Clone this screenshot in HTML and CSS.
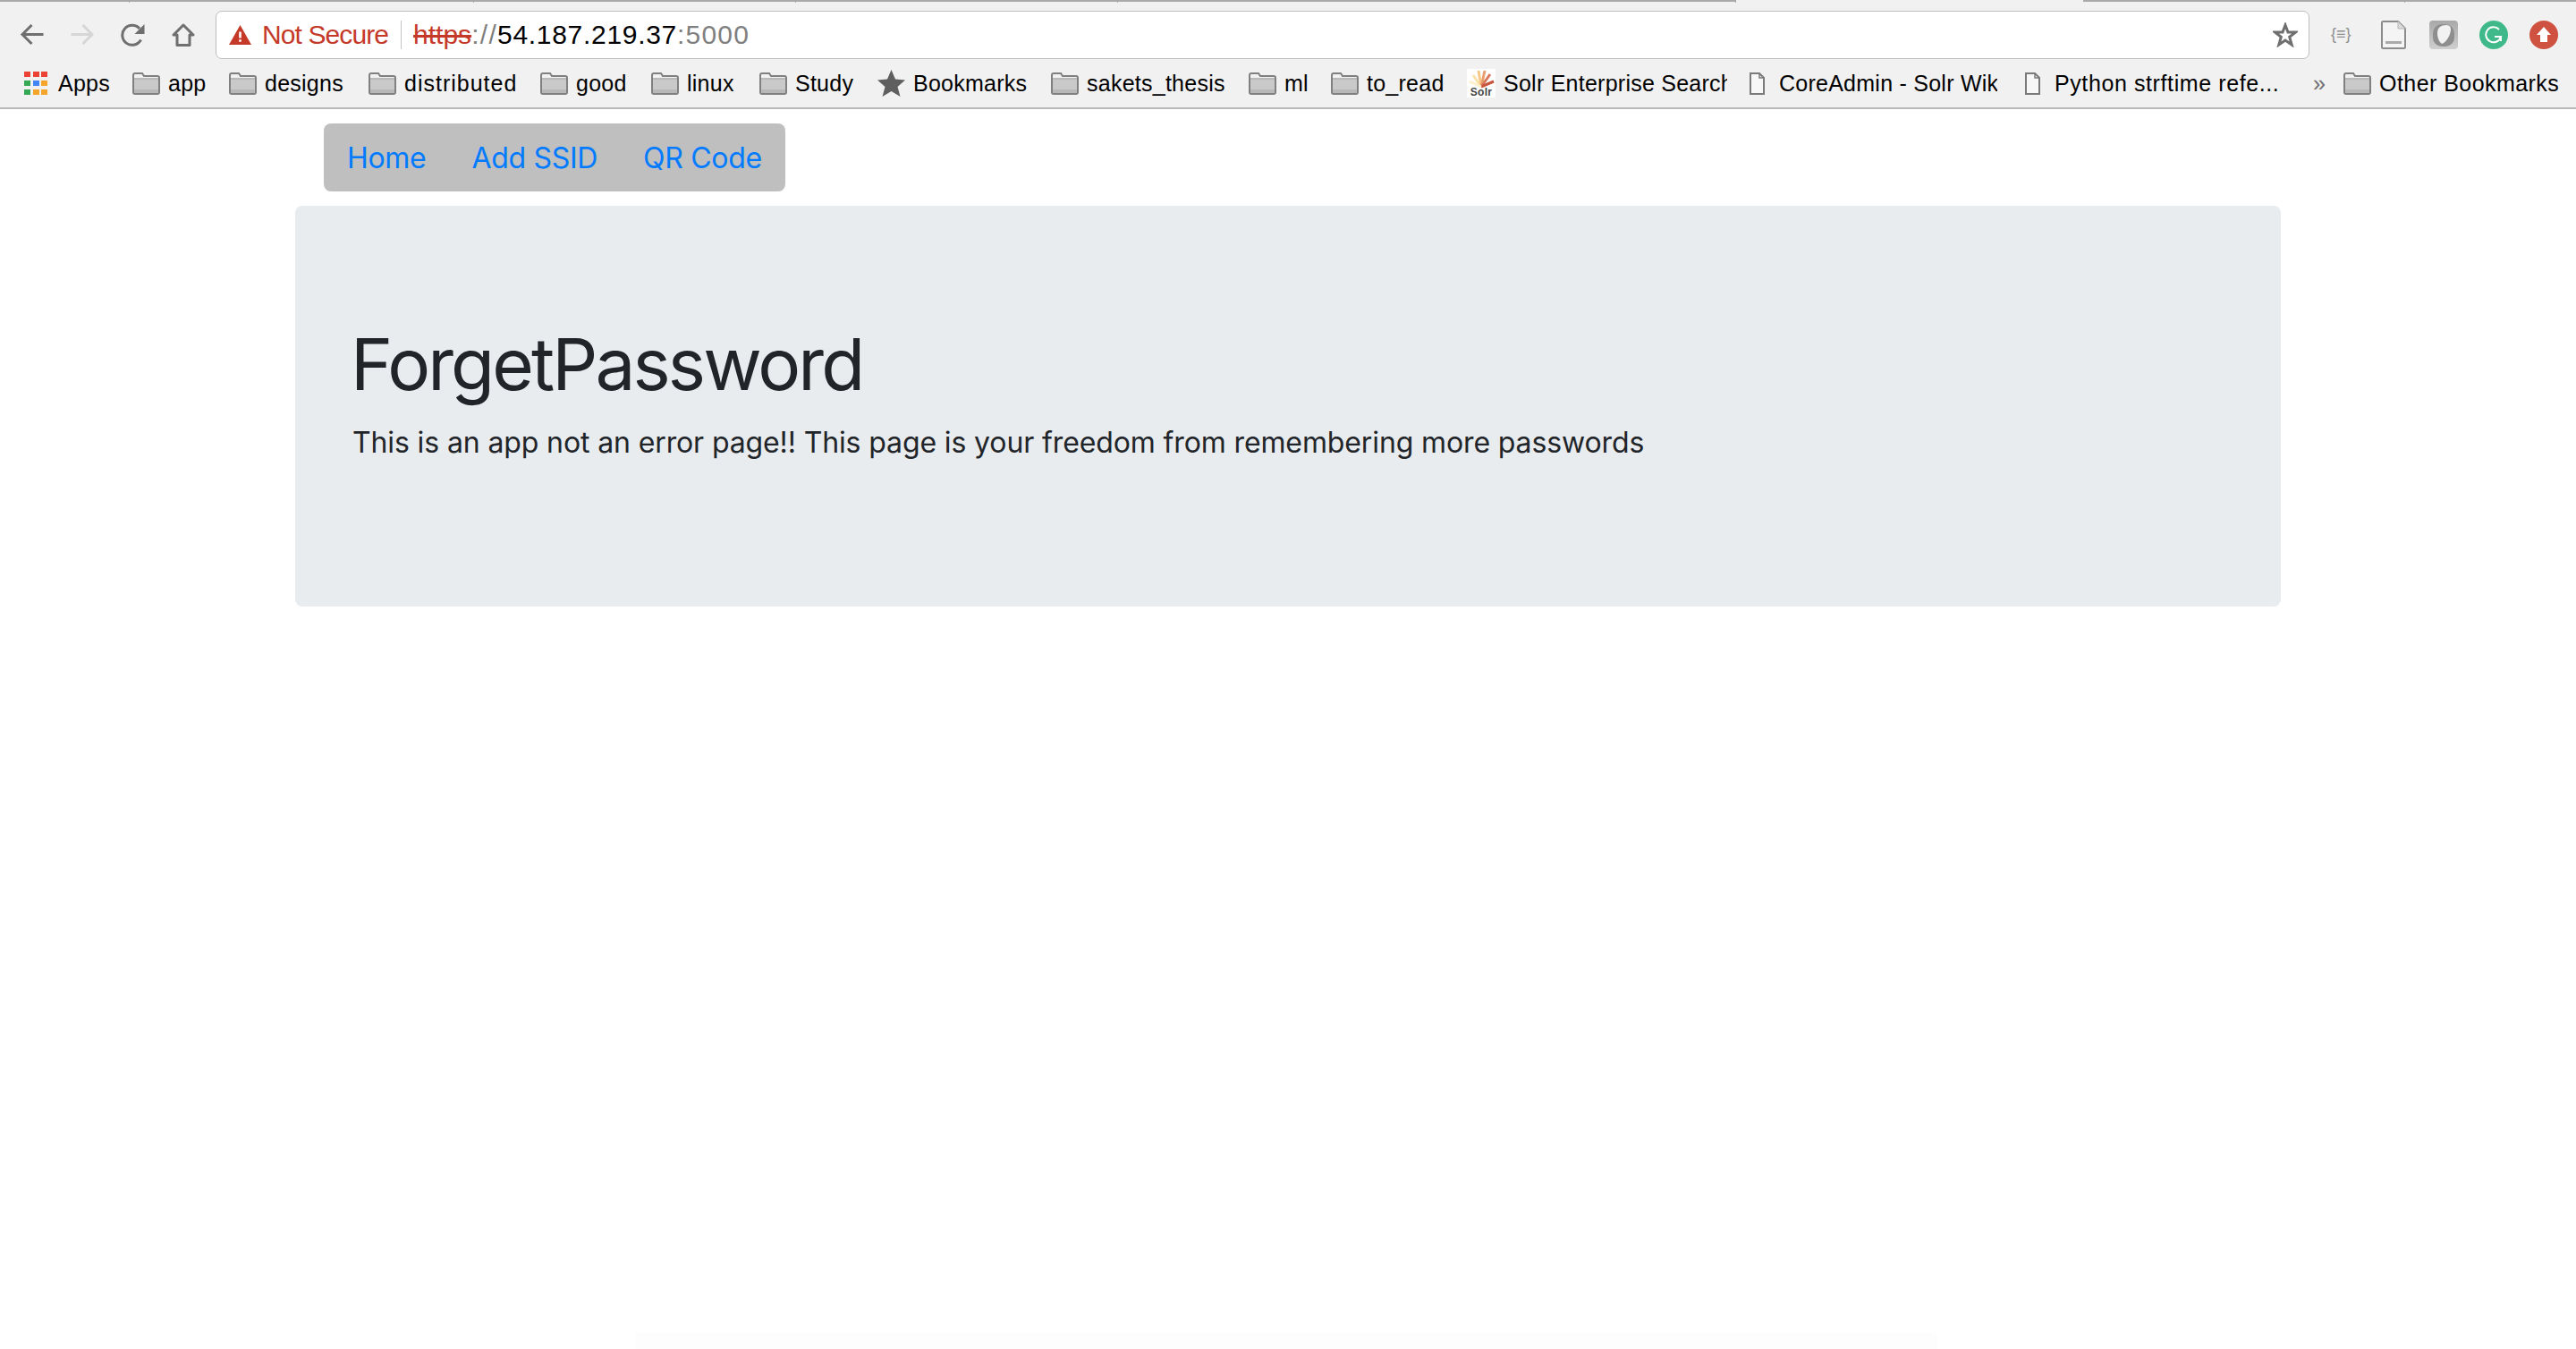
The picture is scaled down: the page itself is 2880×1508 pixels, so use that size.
FILE: index.html
```html
<!DOCTYPE html>
<html>
	<head>
		<title>ForgetPassword</title>
		<meta name="viewport" content="width=device-width, initial-scale=1" />
		<link rel="stylesheet" href="styles.css">
	</head>
	<body>
		<header class="chrome">
			<div class="tabstrip">
				<span class="tab tab-a"></span>
				<span class="tab tab-b"></span>
				<span class="tab tab-c"></span>
				<span class="tab tab-c"></span>
				<span class="tab tab-d"></span>
				<span class="tab-active"></span>
				<span class="tab tab-c"></span>
				<span class="tab tab-rest"></span>
			</div>
			<div class="toolbar">
				<div class="nav-buttons">
					<svg width="27" height="25" viewBox="0 0 27 25"><path d="M26.500 12.500H3M13.500 2L3 12.500L13.500 23" fill="none" stroke="#6f6f6f" stroke-width="3"/></svg>
					<svg width="27" height="25" viewBox="0 0 27 25"><path d="M0.500 12.500H24M13.500 2L24 12.500L13.500 23" fill="none" stroke="#d6d6d6" stroke-width="3"/></svg>
					<svg width="27" height="26" viewBox="0 0 27 26"><path d="M22.500 18.500A11 11 0 1 1 21 6" fill="none" stroke="#6f6f6f" stroke-width="3"/><path d="M26.500 1V12H15.500Z" fill="#6f6f6f"/></svg>
					<svg width="26" height="26" viewBox="0 0 26 26"><path d="M13 2L24 13H20V24.500H6V13H2Z" fill="none" stroke="#6f6f6f" stroke-width="3" stroke-linejoin="round"/></svg>
				</div>
				<div class="omnibox">
					<svg class="warn" width="25" height="22" viewBox="0 0 25 22"><path d="M12.500 0L25 22H0Z" fill="#c53929"/><path d="M11.200 7.500H13.800V14.500H11.200ZM11.200 16.200H13.800V18.800H11.200Z" fill="#fff"/></svg>
					<span class="not-secure">Not Secure</span>
					<span class="omni-sep"></span>
					<span class="url"><s class="scheme">https</s><span class="url-dim url-slashes">://</span><span class="url-host">54.187.219.37</span><span class="url-dim url-port">:5000</span></span>
					<svg class="star" width="28" height="28" viewBox="0 0 28 28"><path d="M14 3L17 11H25.500L18.700 16.300L21.200 25L14 20L6.800 25L9.300 16.300L2.500 11H11Z" fill="none" stroke="#6f6f6f" stroke-width="3"/></svg>
				</div>
				<div class="extensions">
					<span class="ext-json">{≡}</span>
					<svg class="ext-page" width="28" height="32" viewBox="0 0 28 32"><path d="M1 2.500Q1 1 2.500 1H19L27 9V29.500Q27 31 25.500 31H2.500Q1 31 1 29.500Z" fill="#f4f4f4" stroke="#8c8c8c" stroke-width="2"/><path d="M19 1V9H27" fill="#dcdcdc" stroke="#b5b5b5"/><rect x="5" y="23" width="18" height="3" fill="#a9a9a9"/></svg>
					<svg width="32" height="32" viewBox="0 0 32 32"><defs><linearGradient id="ext-grey" x1="0" y1="0" x2="0" y2="1"><stop offset="0" stop-color="#a8a8a8"/><stop offset="1" stop-color="#cfcfcf"/></linearGradient></defs><rect width="32" height="32" rx="4" fill="url(#ext-grey)"/><rect x="4" y="4" width="24" height="25" rx="10" fill="#8e8e8e"/><path d="M9 14C9 8 13 5 19 5C24 5 25 9 23 15C21 21 17 25 14 26C11 24 9 19 9 14Z" fill="#f2f2f2"/></svg>
					<svg width="32" height="32" viewBox="0 0 32 32"><circle cx="16" cy="16" r="16" fill="#3fb98a"/><path d="M22 10A8.500 8.500 0 1 0 24 18H17" fill="none" stroke="#fff" stroke-width="2"/><path d="M24 18V23" stroke="#fff" stroke-width="2"/></svg>
					<svg width="32" height="32" viewBox="0 0 32 32"><circle cx="16" cy="16" r="16" fill="#cf5240"/><path d="M16 7L24 16H20V24H12V16H8Z" fill="#fff"/></svg>
				</div>
			</div>
			<div class="bookmarks">
				<div class="bm bm-apps">
					<svg width="26" height="26" viewBox="0 0 26 26">
						<g fill="#ea4335"><rect x="0" y="0" width="7" height="6"/><rect x="10" y="0" width="7" height="6"/><rect x="19" y="0" width="7" height="6"/></g>
						<g><rect x="0" y="10" width="7" height="6" fill="#34a853"/><rect x="10" y="10" width="7" height="6" fill="#4285f4"/><rect x="19" y="10" width="7" height="6" fill="#f4a428"/></g>
						<g><rect x="0" y="20" width="7" height="6" fill="#34a853"/><rect x="10" y="20" width="7" height="6" fill="#f4a428"/><rect x="19" y="20" width="7" height="6" fill="#f4a428"/></g>
					</svg>
					<span>Apps</span>
				</div>
				<div class="bm"><svg class="folder"><use href="#folder"/></svg><span>app</span></div>
				<div class="bm"><svg class="folder"><use href="#folder"/></svg><span>designs</span></div>
				<div class="bm bm-distributed"><svg class="folder"><use href="#folder"/></svg><span>distributed</span></div>
				<div class="bm"><svg class="folder"><use href="#folder"/></svg><span>good</span></div>
				<div class="bm"><svg class="folder"><use href="#folder"/></svg><span>linux</span></div>
				<div class="bm"><svg class="folder"><use href="#folder"/></svg><span>Study</span></div>
				<div class="bm">
					<svg width="31" height="30" viewBox="0 0 31 30"><path d="M15.500 0L20 10.500L31 11.500L22.500 19L25.500 30L15.500 24L5.500 30L8.500 19L0 11.500L11 10.500Z" fill="#5f5f5f"/></svg>
					<span>Bookmarks</span>
				</div>
				<div class="bm"><svg class="folder"><use href="#folder"/></svg><span>sakets_thesis</span></div>
				<div class="bm"><svg class="folder"><use href="#folder"/></svg><span>ml</span></div>
				<div class="bm"><svg class="folder"><use href="#folder"/></svg><span>to_read</span></div>
				<div class="bm bm-solr">
					<svg width="32" height="32" viewBox="0 0 32 32">
						<rect width="32" height="32" fill="#fff"/>
						<g fill="none" stroke-width="3">
							<path d="M16 20L7 7" stroke="#fbe3a8"/>
							<path d="M16 20L13 2" stroke="#f6c987"/>
							<path d="M16 20L20 2" stroke="#e8a070"/>
							<path d="M16 20L26 6" stroke="#d9775a"/>
							<path d="M16 20L30 14" stroke="#c8563f"/>
							<path d="M16 20L3 14" stroke="#fdf0c8"/>
						</g>
						<text class="solr-mark" x="16" y="30" text-anchor="middle">Solr</text>
					</svg>
					<span class="bm-clip">Solr Enterprise Search</span>
				</div>
				<div class="bm bm-core">
					<svg class="page"><use href="#page"/></svg>
					<span class="bm-clip">CoreAdmin - Solr Wiki</span>
				</div>
				<div class="bm bm-python">
					<svg class="page"><use href="#page"/></svg>
					<span>Python strftime refe...</span>
				</div>
				<span class="overflow">»</span>
				<div class="bm bm-other"><svg class="folder"><use href="#folder"/></svg><span>Other Bookmarks</span></div>
			</div>
		</header>

		<main class="container">
			<nav class="site-nav">
				<a href="#">Home</a>
				<a href="#">Add SSID</a>
				<a href="#">QR Code</a>
			</nav>
			<section class="jumbotron">
				<h1>ForgetPassword</h1>
				<p>This is an app not an error page!! This page is your freedom from remembering more passwords</p>
			</section>
		</main>
		<div class="bottom-fade"></div>

		<svg class="defs" width="0" height="0">
			<symbol id="folder" viewBox="0 0 31 25">
				<path d="M1 3Q1 1 3 1H11L13 4H28Q30 4 30 6V22Q30 24 28 24H3Q1 24 1 22Z" fill="#f1f1f1" stroke="#808080" stroke-width="2"/>
				<path d="M2 8H29V23H2Z" fill="#c9c9c9"/>
				<path d="M2 7H29" stroke="#808080" stroke-width="1"/>
				<path d="M2 19H29V23H2Z" fill="#b8b8b8"/>
			</symbol>
			<symbol id="page" viewBox="0 0 17 25">
				<path d="M1 1H11L16 6V24H1Z" fill="#f7f7f7" stroke="#7a7a7a" stroke-width="2"/>
				<path d="M11 1V6H16" fill="none" stroke="#7a7a7a" stroke-width="1.500"/>
			</symbol>
		</svg>
	</body>
</html>
```

FILE: styles.css
```css
* { box-sizing: border-box; }
body {
	margin: 0;
	min-height: 1508px;
	background: #fff;
	font-family: "Inter", sans-serif;
	color: #212529;
	overflow: hidden;
	position: relative;
}

/* browser chrome */
.chrome {
	background: #f1f1f1;
	border-bottom: 2px solid #b9b9b9;
	font-family: "Liberation Sans", sans-serif;
}
.tabstrip {
	display: flex;
	height: 11px;
}
.tab {
	height: 3px;
	border-top: 2px solid #a9a9a9;
	border-right: 1px solid #a9a9a9;
}
.tab-a { width: 145px; }
.tab-b { width: 385px; }
.tab-c { width: 360px; }
.tab-d { width: 691px; }
.tab-active { width: 388px; }
.tab-rest { flex: 1; border-right: 0; }

.toolbar {
	display: flex;
	align-items: center;
	height: 55px;
}
.nav-buttons {
	display: flex;
	align-items: center;
	gap: 29.5px;
	padding-left: 22px;
	width: 241px;
}
.omnibox {
	display: flex;
	align-items: center;
	width: 2341px;
	height: 54px;
	background: #fff;
	border: 1px solid #bdbdbd;
	border-radius: 7px;
	padding-left: 14px;
	font-size: 30px;
	color: #000;
}
.not-secure {
	color: #c53929;
	margin-left: 12px;
	letter-spacing: -0.9px;
}
.omni-sep {
	width: 1px;
	height: 32px;
	background: #c4c4c4;
	margin: 0 13px 0 14px;
}
.scheme { color: #c53929; }
.url-dim { color: #7f7f7f; }
.url-slashes { letter-spacing: 1.3px; }
.url-host { letter-spacing: 0.7px; }
.url-port { letter-spacing: 1.2px; }
.star { margin-left: auto; margin-right: 12px; }

.extensions {
	display: flex;
	align-items: center;
	gap: 24px;
	padding-left: 24px;
}
.ext-json {
	width: 32px;
	font-size: 18px;
	color: #8f8f8f;
	white-space: nowrap;
}
.ext-page { margin-right: 2px; }

.bookmarks {
	display: grid;
	grid-template-columns: 121px 108px 156px 192px 124px 121px 132px 194px 221px 92px 152px 316px 308px 322px 34px 1fr;
	align-items: center;
	height: 54px;
	padding-left: 27px;
	font-size: 25px;
	letter-spacing: 0.25px;
	color: #000;
}
.bm {
	display: flex;
	align-items: center;
	gap: 9px;
	white-space: nowrap;
}
.bm-apps { gap: 12px; }
.bm-distributed span { letter-spacing: 1px; }
.folder { width: 31px; height: 25px; flex-shrink: 0; }
.page { width: 17px; height: 25px; flex-shrink: 0; }
.bm-clip { overflow: hidden; }
.bm-solr .bm-clip { width: 250px; }
.bm-core .bm-clip { width: 244px; }
.bm-core { gap: 16px; }
.bm-python { gap: 16px; }
.bm-python span { letter-spacing: 0.6px; }
.bm-other span { letter-spacing: 0.45px; }
.overflow { color: #6f6f6f; }
.solr-mark {
	font-family: "Liberation Sans", sans-serif;
	font-size: 12px;
	font-weight: bold;
	fill: #444;
}
.defs { position: absolute; }

/* page */
.container {
	width: 2220px;
	margin: 0 auto;
}
.site-nav {
	display: inline-flex;
	align-items: center;
	gap: 51px;
	height: 76px;
	margin: 16px 0 0 32px;
	padding: 0 26px;
	background: #bfbfbf;
	border-radius: 8px;
	vertical-align: top;
}
.site-nav a {
	color: #007bff;
	text-decoration: none;
	font-size: 32px;
	letter-spacing: -0.3px;
}
.jumbotron {
	height: 448px;
	margin-top: 16px;
	padding: 129px 64px 0;
	background: #e9ecef;
	border-radius: 8px;
}
.jumbotron h1 {
	margin: 0 0 16px -2px;
	font-size: 80px;
	font-weight: 400;
	line-height: 96px;
	letter-spacing: -2.9px;
}
.jumbotron p {
	margin: 0;
	font-size: 32px;
	line-height: 48px;
	letter-spacing: -0.12px;
}
.bottom-fade {
	position: absolute;
	left: 710px;
	bottom: 0;
	width: 1456px;
	height: 18px;
	background: #fdfdfd;
}
```
